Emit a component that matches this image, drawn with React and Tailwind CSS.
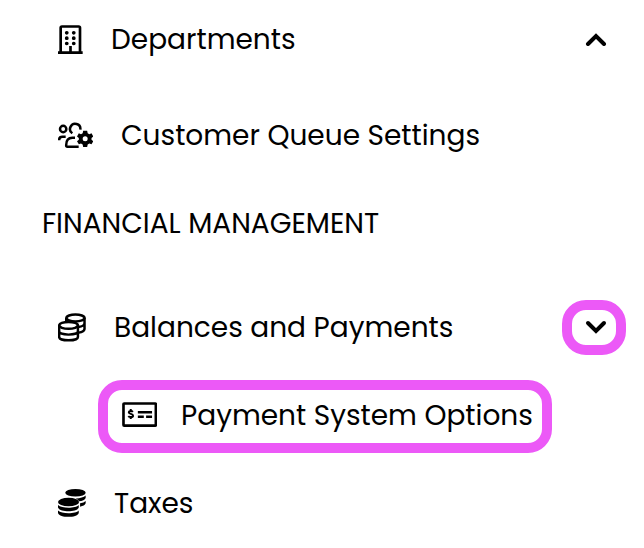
import { clsx } from 'clsx'

function BuildingIcon() {
  return (
    <svg viewBox="54 44 75 90" className="h-[30px] w-[25px] shrink-0" fill="none" stroke="currentColor" strokeWidth="8" aria-hidden="true">
      <path d="M62 127V52Q62 48.500 66 48.500H116Q120 48.500 120 52V127M54 127H128M91.500 107V127" />
      <path
        d="M80 67.500H80.500M101 67.500H101.500M80 83.500H80.500M101 83.500H101.500M80 99.500H80.500M101 99.500H101.500"
        strokeWidth="11"
        strokeLinecap="round"
      />
    </svg>
  )
}

function QueueSettingsIcon() {
  return (
    <svg viewBox="54 53 105 84" className="h-7 w-[35px] shrink-0" fill="none" stroke="currentColor" strokeWidth="7.5" aria-hidden="true">
      <circle cx="69.500" cy="74" r="9.500" />
      <path d="M57.500 108V106Q58 97.500 67 97.500H77" />
      <path d="M97 87A15.500 15.500 0 1 1 121 76" />
      <path d="M116 127.500H82Q78.500 127.500 78.500 123C78.500 108 86 100.500 97 100.500H105" />
      <path
        d="M129.500 79H141.500L143 86.500L148 89.500L154.500 87L160 96.500L154.500 101V106L160 110.500L154.500 120L148 117.500L143 120.500L141.500 128H129.500L128 120.500L123 117.500L116.500 120L111 110.500L116.500 106V101L111 96.500L116.500 87L123 89.500L128 86.500ZM135.500 96A7.500 7.500 0 1 0 135.500 111A7.500 7.500 0 1 0 135.500 96Z"
        fill="currentColor"
        fillRule="evenodd"
        stroke="none"
      />
    </svg>
  )
}

function CoinsOutlineIcon() {
  return (
    <svg viewBox="54 40 85 90" className="h-[30px] w-7 shrink-0" fill="none" stroke="currentColor" strokeWidth="7.5" aria-hidden="true">
      <path d="M79 66V54M134.500 54V88Q133 97 117 99M134.500 71Q133 80 116 82" />
      <ellipse cx="107" cy="54.500" rx="27.500" ry="10.500" />
      <ellipse cx="86" cy="77" rx="28.500" ry="10.500" fill="white" />
      <path d="M57.500 77V112C57.500 126 114.500 126 114.500 112V77M57.500 95C57.500 108.500 114.500 108.500 114.500 95" />
    </svg>
  )
}

function CoinsSolidIcon() {
  return (
    <svg viewBox="54 40 85 96" className="h-8 w-7 shrink-0" fill="currentColor" aria-hidden="true">
      <ellipse cx="107" cy="54" rx="31" ry="11.500" />
      <path d="M138 62V70C136 76 128 79 118 80Q115 74 108 71Q129 70 138 62ZM138 79V86C136 92 130 94 121 96V86Q133 84 138 79Z" />
      <ellipse cx="86" cy="82" rx="32" ry="13" />
      <path d="M54 91C65 102 107 102 117 91V99C112 114 59 114 54 99ZM54 108C65 119 107 119 117 108V115C112 131 59 131 54 115Z" />
    </svg>
  )
}

function MoneyCheckIcon() {
  return (
    <svg viewBox="95 96 106 84" className="h-7 w-[35px] shrink-0" fill="none" stroke="currentColor" aria-hidden="true">
      <rect x="99.500" y="100" width="98" height="67" rx="2" strokeWidth="8" />
      <path d="M128 125.500C125 122 115.500 121.500 115.500 127C115.500 133 128.500 130 128.500 137C128.500 143 117 142 114 138.500M121.500 117V123M121.500 141V147" strokeWidth="6" />
      <path d="M143 126.500H186M143 140H161M168 140H186" strokeWidth="7.5" />
    </svg>
  )
}

function Chevron({ up }) {
  return (
    <svg viewBox="0 0 22 14" className="h-3.5 w-[22px]" fill="none" stroke="currentColor" strokeWidth="4" strokeLinecap="round" aria-hidden="true">
      <path d={up ? 'M3 12L11 4L19 12' : 'M3 3L11 11L19 3'} />
    </svg>
  )
}

function ToggleButton({ label, expanded, highlighted }) {
  return (
    <button
      type="button"
      aria-label={label}
      aria-expanded={expanded}
      className={clsx(
        'mb-0.5 ml-auto flex h-[55px] w-16 shrink-0 items-center justify-center rounded-3xl border-10 pl-1',
        highlighted ? 'border-[#ec59f7]' : 'border-transparent',
      )}
    >
      <Chevron up={expanded} />
    </button>
  )
}

function NavLink({ icon, gap, children }) {
  return (
    <a href="#" className={clsx('flex items-center whitespace-nowrap', gap)}>
      {icon}
      <span>{children}</span>
    </a>
  )
}

export default function App() {
  return (
    <nav className="min-h-screen bg-white py-1 pr-[18px] pl-[58px] font-['Poppins','Inter',sans-serif] text-[28px] leading-10 text-black">
      <div className="flex h-18 items-center">
        <NavLink icon={<BuildingIcon />} gap="gap-7">Departments</NavLink>
        <ToggleButton label="Collapse Departments" expanded />
      </div>
      <div className="mt-6 flex h-18 items-center">
        <NavLink icon={<QueueSettingsIcon />} gap="gap-7">Customer Queue Settings</NavLink>
      </div>
      <h2 className="mt-4 -ml-4 flex h-18 items-center whitespace-nowrap">FINANCIAL MANAGEMENT</h2>
      <div className="mt-8 flex h-18 items-center">
        <NavLink icon={<CoinsOutlineIcon />} gap="gap-7">Balances and Payments</NavLink>
        <ToggleButton label="Expand Balances and Payments" expanded={false} highlighted />
      </div>
      <div className="mt-4 mr-[74px] ml-10 flex h-[73px] items-center rounded-3xl border-10 border-[#ec59f7] pb-px pl-3.5">
        <NavLink icon={<MoneyCheckIcon />} gap="gap-6">Payment System Options</NavLink>
      </div>
      <div className="mt-[15px] flex h-18 items-center">
        <NavLink icon={<CoinsSolidIcon />} gap="gap-7">Taxes</NavLink>
      </div>
    </nav>
  )
}
